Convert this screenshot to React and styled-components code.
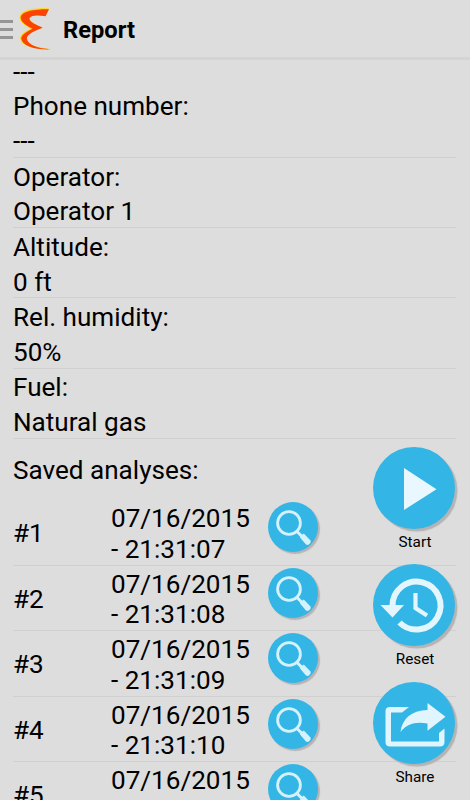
import React from 'react'
import styled, { createGlobalStyle } from 'styled-components'

const GlobalStyle = createGlobalStyle`
  * {
    box-sizing: border-box;
  }
  body {
    margin: 0;
    background: #dddddd;
    color: #000;
    font-family: Roboto, "Liberation Sans", sans-serif;
  }
`

const Screen = styled.div`
  position: relative;
  display: flex;
  flex-direction: column;
  width: 470px;
  height: 800px;
  overflow: hidden;
`

const ActionBar = styled.header`
  display: flex;
  flex: none;
  align-items: center;
  height: 60px;
  border-bottom: 3px solid #d4d4d4;
`

const MenuIcon = styled.div`
  display: flex;
  flex-direction: column;
  gap: 5px;
  width: 13px;
  padding-top: 2px;
`

const MenuBar = styled.span`
  height: 3px;
  background: #959595;
`

const Logo = styled.svg`
  width: 34px;
  height: 44px;
  margin: 0 0 0 5px;
`

const Title = styled.h1`
  margin: 3px 0 0 11px;
  font-size: 23.7px;
  font-weight: 700;
  line-height: 28px;
  color: #000;
`

const Content = styled.main`
  flex: 1;
  min-height: 0;
  padding: 0 14px 0 13px;
  overflow: hidden;
  font-size: 26.1px;
  line-height: 30.75px;
`

const Fields = styled.div`
  margin-top: -7.2px;
`

const Field = styled.div`
  border-bottom: ${(props) => (props.$plain ? '0' : '1px')} solid #d0d0d0;
`

const Line = styled.div`
  height: 34.65px;
  padding-top: 3.9px;
`

const SectionTitle = styled.h2`
  margin: 0;
  padding: 16.5px 0 14px;
  font-size: inherit;
  font-weight: 400;
`

const Row = styled.div`
  display: grid;
  grid-template-columns: 98px 157px auto;
  align-items: center;
  height: 65.6px;
  border-bottom: 1px solid #d0d0d0;
`

const Stamp = styled.div`
  width: 145px;
  padding-top: 2.6px;
`

const Number = styled.div`
  padding-top: 2px;
`

const RoundButton = styled.button`
  display: block;
  width: ${(props) => props.$size}px;
  height: ${(props) => props.$size}px;
  padding: 0;
  border: 0;
  border-radius: 50%;
  background: #33b5e5;
  box-shadow: ${(props) => props.$shadow}px ${(props) => props.$shadow}px 1px #b5b3b3;
`

const Glyph = styled.svg`
  display: block;
  width: 100%;
  height: 100%;
`

const SearchButton = styled(RoundButton)`
  margin-top: -11px;
`

const Actions = styled.div`
  position: absolute;
  top: 446.5px;
  right: 15px;
  display: flex;
  flex-direction: column;
  width: 82px;
`

const Action = styled.div`
  height: 117.6px;
`

const ActionLabel = styled.div`
  margin-top: 4.4px;
  padding-left: 2px;
  font-size: 15.3px;
  line-height: 18px;
  text-align: center;
`

const fields = [
  { label: 'Phone number:', value: '---' },
  { label: 'Operator:', value: 'Operator 1' },
  { label: 'Altitude:', value: '0 ft' },
  { label: 'Rel. humidity:', value: '50%' },
  { label: 'Fuel:', value: 'Natural gas' },
]

const analyses = [
  { date: '07/16/2015', time: '21:31:07' },
  { date: '07/16/2015', time: '21:31:08' },
  { date: '07/16/2015', time: '21:31:09' },
  { date: '07/16/2015', time: '21:31:10' },
  { date: '07/16/2015', time: '21:31:11' },
]

const EpsilonLogo = () => (
  <Logo viewBox="0 0 34 44">
    {/* yellow edge behind the red stroke */}
    <path
      d="M31 1.200C19 1 2 1.500 1.700 10.500C2 16 8 19.500 13 21.500C6 25 1.500 28 2.300 32.500C4 39.500 17 42 32.500 41.600C20 41 9 38 8.300 31C8.500 27 15 24 24 20.500C18 17.500 11 15 11.300 10.500C13 7.500 20 7.500 27.300 9Z"
      fill="#ffd800"
    />
    <path
      d="M31 2.200C20 2.200 4 3 2.600 10.500C3 15.500 9 19 14.500 21.700C8 25 2.800 28.500 3.300 32C5 39.500 18 43 33 42.300C20 41.500 9.500 38 8.800 31.500C9 27.500 16 24 24.700 20.800C18 17.500 11 15 11.500 11C13 8 20 8 27.500 9.200Z"
      fill="#fb4304"
    />
  </Logo>
)

const SearchIcon = () => (
  <Glyph viewBox="0 0 50 50">
    <circle cx="21" cy="21" r="11.400" fill="none" stroke="#d5f2fc" strokeWidth="2.800" />
    <path d="M29 29.500L34 34.500" stroke="#d5f2fc" strokeWidth="3" />
    <path d="M33.200 33.500L35.800 31.500L42.500 38.500Q43.500 40 41.500 42Q39.500 43.500 38 42.500L32 35.500Z" fill="#d5f2fc" />
  </Glyph>
)

const PlayIcon = () => (
  <Glyph viewBox="0 0 82 82">
    <path d="M31 21L63.500 42.200L31 63Z" fill="#e9f8fe" />
  </Glyph>
)

const ResetIcon = () => (
  <Glyph viewBox="0 0 82 82">
    <path d="M19.500 42A24 24 0 1 1 26.500 58.500" fill="none" stroke="#e4f6fd" strokeWidth="6" />
    <path d="M7.500 41H31L19.500 53.500Z" fill="#e4f6fd" />
    <path d="M42.500 29V44L54 51.500" fill="none" stroke="#e4f6fd" strokeWidth="4.200" />
  </Glyph>
)

const ShareIcon = () => (
  <Glyph viewBox="0 0 82 82">
    <path
      d="M36 25H17C14 25 12.500 26.500 12.500 29V60C12.500 63 14 64.500 17 64.500H66.500C70 64.500 71.500 63 71.500 60V46.500L66 51V59.500H18V30.500H29Z"
      fill="#e0f5fd"
    />
    <path d="M54.500 21L72.500 34.800L54.500 48.800V41.500C42 39.500 34 42 27.500 50C29 37 38 28.500 54.500 28Z" fill="#e0f5fd" />
  </Glyph>
)

const actions = [
  { label: 'Start', icon: <PlayIcon /> },
  { label: 'Reset', icon: <ResetIcon /> },
  { label: 'Share', icon: <ShareIcon /> },
]

const App = () => {
  return (
    <Screen>
      <GlobalStyle />
      <ActionBar>
        <MenuIcon>
          <MenuBar />
          <MenuBar />
          <MenuBar />
        </MenuIcon>
        <EpsilonLogo />
        <Title>Report</Title>
      </ActionBar>
      <Content>
        <Fields>
          <Field $plain>
            <Line>---</Line>
          </Field>
          {fields.map((field) => (
            <Field key={field.label}>
              <Line>{field.label}</Line>
              <Line>{field.value}</Line>
            </Field>
          ))}
        </Fields>
        <SectionTitle>Saved analyses:</SectionTitle>
        {analyses.map((item, index) => (
          <Row key={item.time}>
            <Number>#{index + 1}</Number>
            <Stamp>
              {item.date} - {item.time}
            </Stamp>
            <SearchButton $size={50} $shadow={2} aria-label="Open analysis">
              <SearchIcon />
            </SearchButton>
          </Row>
        ))}
      </Content>
      <Actions>
        {actions.map((action) => (
          <Action key={action.label}>
            <RoundButton $size={82} $shadow={2.5} aria-label={action.label}>
              {action.icon}
            </RoundButton>
            <ActionLabel>{action.label}</ActionLabel>
          </Action>
        ))}
      </Actions>
    </Screen>
  )
}

export default App
